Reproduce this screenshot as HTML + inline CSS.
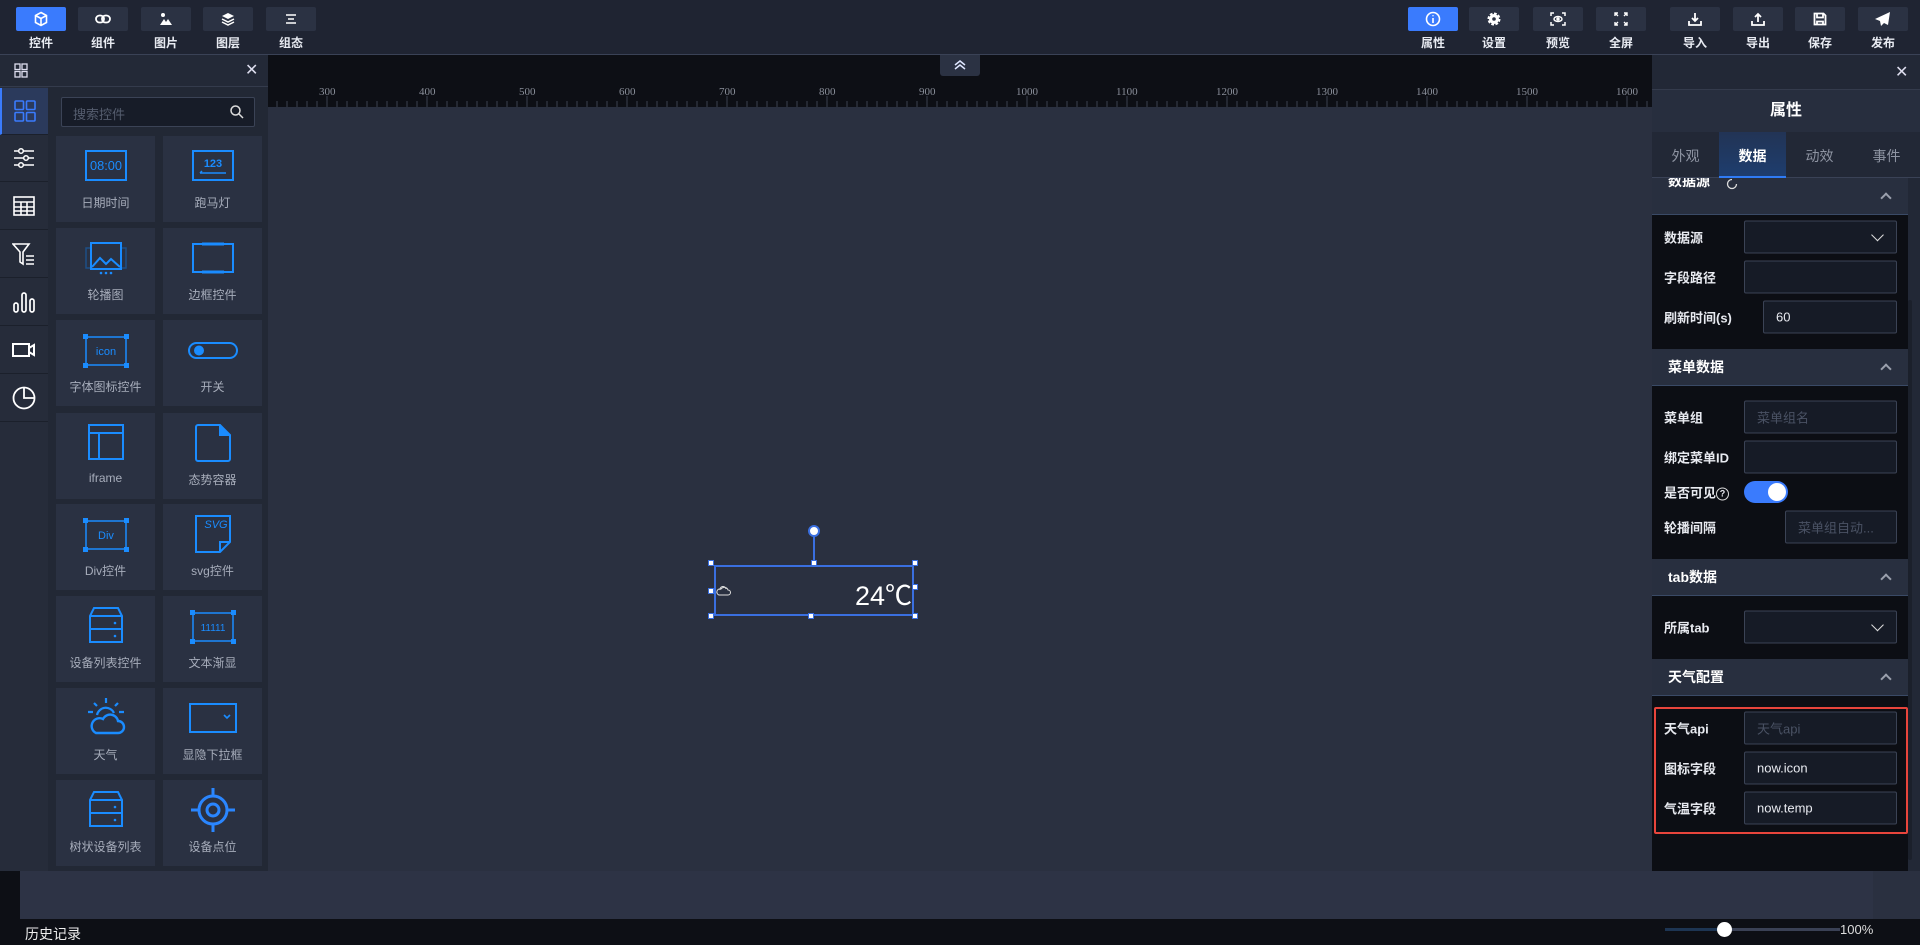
<!DOCTYPE html>
<html><head><meta charset="utf-8"><style>
*{box-sizing:border-box;margin:0;padding:0}
body{width:1920px;height:945px;overflow:hidden;background:#2a3040;font-family:"Liberation Sans","Noto Sans CJK SC",sans-serif;color:#fff;position:relative;font-size:13px}
.a{position:absolute}
.top{left:0;top:0;width:1920px;height:55px;background:#1f2432;border-bottom:1px solid #3a4256}
.tb{position:absolute;top:7px;width:50px;height:24px;background:#2b3243;border-radius:2px;display:flex;align-items:center;justify-content:center}
.tb.on{background:#3a7bfd}
.tl{position:absolute;top:34px;width:50px;text-align:center;font-size:12px;font-weight:bold;color:#e8ebf2}
.ruler{left:268px;top:55px;width:1384px;height:52px;background:#0d0f15}
.rn{position:absolute;top:31px;font-family:"Liberation Serif",serif;font-size:11px;color:#8a8f9a}
.lp{left:0;top:55px;width:268px;height:816px;background:#222835}
.side{left:0;top:87px;width:48px;height:784px;background:#262c3a}
.si{position:absolute;left:0;width:48px;height:47px;border-bottom:1px solid #1b202b;display:flex;align-items:center;justify-content:center}
.tile{position:absolute;width:99px;height:86px;background:#2a3142}
.tile svg{position:absolute;left:50%;top:14px;transform:translateX(-50%)}
.tile span{position:absolute;left:0;right:0;top:58px;text-align:center;color:#a7adbb;font-size:12px}
.rp{left:1652px;top:55px;width:268px;height:816px;background:#222836}
.sh{position:absolute;left:1652px;width:256px;height:37px;background:#282f3f;border-bottom:1px solid #3a4a66;font-weight:bold;font-size:14px;padding-left:16px;display:flex;align-items:center}
.sh:after{content:"";position:absolute;right:18px;top:16px;width:6px;height:6px;border-left:2px solid #9aa0ad;border-top:2px solid #9aa0ad;transform:rotate(45deg)}
.lb{position:absolute;left:1664px;font-size:13px;font-weight:bold;color:#e8eaf0;transform:translateY(-50%)}
.in{position:absolute;height:33px;background:#161b26;border:1px solid #3b4355;border-radius:2px;transform:translateY(-50%);padding-left:12px;display:flex;align-items:center;font-size:13px;color:#e8eaf0}
.ph{color:#4a5264}
.dd:after{content:"";position:absolute;right:14px;top:9px;width:8px;height:8px;border-right:1.5px solid #ddd;border-bottom:1.5px solid #ddd;transform:rotate(45deg)}
.h{position:absolute;width:6px;height:6px;background:#fff;border:1.5px solid #3a6fe0}
</style></head><body>
<div class="a top"></div>
<div class="tb on" style="left:16px"><svg width="16" height="16" viewBox="0 0 16 16" fill="none" stroke="#fff" stroke-width="1.6"><path d="M8 1.5l5.5 3v7L8 14.5 2.5 11.5v-7z M2.5 4.5L8 7.5l5.5-3 M8 7.5v7"/></svg></div><div class="tl" style="left:16px">控件</div>
<div class="tb" style="left:78px"><svg width="16" height="10" viewBox="0 0 16 10" fill="none" stroke="#fff" stroke-width="1.8"><rect x="1" y="1.5" width="8" height="7" rx="3.5"/><rect x="7" y="1.5" width="8" height="7" rx="3.5"/></svg></div><div class="tl" style="left:78px">组件</div>
<div class="tb" style="left:141px"><svg width="14" height="14" viewBox="0 0 14 14" fill="#fff"><circle cx="4" cy="3" r="2"/><path d="M1 13l4-6 2 3 2-3 4 6z"/></svg></div><div class="tl" style="left:141px">图片</div>
<div class="tb" style="left:203px"><svg width="14" height="14" viewBox="0 0 14 14" fill="#fff"><path d="M7 1l6 3-6 3-6-3z"/><path d="M1 7l6 3 6-3" stroke="#fff" fill="none" stroke-width="1.5"/><path d="M1 10l6 3 6-3" stroke="#fff" fill="none" stroke-width="1.5"/></svg></div><div class="tl" style="left:203px">图层</div>
<div class="tb" style="left:266px"><svg width="12" height="10" viewBox="0 0 12 10" stroke="#fff" stroke-width="1.5"><path d="M1 1h10M3 5h6M1 9h10"/></svg></div><div class="tl" style="left:266px">组态</div>
<div class="tb on" style="left:1408px"><svg width="16" height="16" viewBox="0 0 16 16" fill="none" stroke="#fff" stroke-width="1.6"><circle cx="8" cy="8" r="6.5"/><path d="M8 7v5M8 4.2v1" /></svg></div><div class="tl" style="left:1408px">属性</div>
<div class="tb" style="left:1469px"><svg width="14" height="14" viewBox="0 0 14 14"><circle cx="7" cy="7" r="5" fill="#fff" stroke="#fff" stroke-width="3" stroke-dasharray="2.5 1.4"/><circle cx="7" cy="7" r="1.8" fill="#2b3243"/></svg></div><div class="tl" style="left:1469px">设置</div>
<div class="tb" style="left:1533px"><svg width="16" height="14" viewBox="0 0 16 14" fill="none" stroke="#fff" stroke-width="1.5"><path d="M1 4V1h3M12 1h3v3M15 10v3h-3M4 13H1v-3"/><ellipse cx="8" cy="7" rx="4" ry="2.5"/><circle cx="8" cy="7" r="1" fill="#fff"/></svg></div><div class="tl" style="left:1533px">预览</div>
<div class="tb" style="left:1596px"><svg width="14" height="14" viewBox="0 0 14 14" fill="none" stroke="#fff" stroke-width="1.4"><path d="M1 4V1h3M1 1l3 3M10 1h3v3M13 1l-3 3M13 10v3h-3M13 13l-3-3M4 13H1v-3M1 13l3-3"/></svg></div><div class="tl" style="left:1596px">全屏</div>
<div class="tb" style="left:1670px"><svg width="14" height="14" viewBox="0 0 14 14" fill="none" stroke="#fff" stroke-width="1.8"><path d="M7 1v8M4 6l3 3 3-3M1 9v4h12V9"/></svg></div><div class="tl" style="left:1670px">导入</div>
<div class="tb" style="left:1733px"><svg width="14" height="14" viewBox="0 0 14 14" fill="none" stroke="#fff" stroke-width="1.8"><path d="M7 10V2M4 5l3-3 3 3M1 9v4h12V9"/></svg></div><div class="tl" style="left:1733px">导出</div>
<div class="tb" style="left:1795px"><svg width="14" height="14" viewBox="0 0 14 14" fill="none" stroke="#fff" stroke-width="1.8"><path d="M1.5 1.5h9l2 2v9h-11z M4 1.5v4h6v-4 M4 12.5v-3h6v3"/></svg></div><div class="tl" style="left:1795px">保存</div>
<div class="tb" style="left:1858px"><svg width="16" height="14" viewBox="0 0 16 14" fill="#fff"><path d="M15 0L0 7l5 2 1 5 3-3 4 2z"/></svg></div><div class="tl" style="left:1858px">发布</div>

<div class="a ruler">
<div class="rn" style="left:51px">300</div><div class="rn" style="left:151px">400</div><div class="rn" style="left:251px">500</div><div class="rn" style="left:351px">600</div><div class="rn" style="left:451px">700</div><div class="rn" style="left:551px">800</div><div class="rn" style="left:651px">900</div><div class="rn" style="left:748px">1000</div><div class="rn" style="left:848px">1100</div><div class="rn" style="left:948px">1200</div><div class="rn" style="left:1048px">1300</div><div class="rn" style="left:1148px">1400</div><div class="rn" style="left:1248px">1500</div><div class="rn" style="left:1348px">1600</div>
</div>
<svg class="a" style="left:268px;top:96px" width="1384" height="11"><path stroke="#3b4150" stroke-width="1" d="M9 5v6M19 5v6M29 5v6M39 5v6M49 5v6M59 0v11M69 5v6M79 5v6M89 5v6M99 5v6M109 5v6M119 5v6M129 5v6M139 5v6M149 5v6M159 0v11M169 5v6M179 5v6M189 5v6M199 5v6M209 5v6M219 5v6M229 5v6M239 5v6M249 5v6M259 0v11M269 5v6M279 5v6M289 5v6M299 5v6M309 5v6M319 5v6M329 5v6M339 5v6M349 5v6M359 0v11M369 5v6M379 5v6M389 5v6M399 5v6M409 5v6M419 5v6M429 5v6M439 5v6M449 5v6M459 0v11M469 5v6M479 5v6M489 5v6M499 5v6M509 5v6M519 5v6M529 5v6M539 5v6M549 5v6M559 0v11M569 5v6M579 5v6M589 5v6M599 5v6M609 5v6M619 5v6M629 5v6M639 5v6M649 5v6M659 0v11M669 5v6M679 5v6M689 5v6M699 5v6M709 5v6M719 5v6M729 5v6M739 5v6M749 5v6M759 0v11M769 5v6M779 5v6M789 5v6M799 5v6M809 5v6M819 5v6M829 5v6M839 5v6M849 5v6M859 0v11M869 5v6M879 5v6M889 5v6M899 5v6M909 5v6M919 5v6M929 5v6M939 5v6M949 5v6M959 0v11M969 5v6M979 5v6M989 5v6M999 5v6M1009 5v6M1019 5v6M1029 5v6M1039 5v6M1049 5v6M1059 0v11M1069 5v6M1079 5v6M1089 5v6M1099 5v6M1109 5v6M1119 5v6M1129 5v6M1139 5v6M1149 5v6M1159 0v11M1169 5v6M1179 5v6M1189 5v6M1199 5v6M1209 5v6M1219 5v6M1229 5v6M1239 5v6M1249 5v6M1259 0v11M1269 5v6M1279 5v6M1289 5v6M1299 5v6M1309 5v6M1319 5v6M1329 5v6M1339 5v6M1349 5v6M1359 0v11M1369 5v6M1379 5v6"/></svg>
<div class="a" style="left:940px;top:55px;width:40px;height:21px;background:#2b3243;border-radius:0 0 3px 3px"><svg class="a" style="left:14px;top:4px" width="12" height="12" viewBox="0 0 12 12" fill="none" stroke="#dfe6ff" stroke-width="1.5"><path d="M1 6l5-4 5 4M1 10l5-4 5 4"/></svg></div>

<div class="a" style="left:20px;top:871px;width:1853px;height:48px;background:#2d3345"></div>
<div class="a" style="left:0;top:871px;width:20px;height:74px;background:#0d0f15"></div>
<div class="a" style="left:0;top:919px;width:1920px;height:26px;background:#0d0f15"></div>
<div class="a" style="left:25px;top:924px;font-size:14px;color:#eee">历史记录</div>
<div class="a" style="left:1665px;top:928px;width:175px;height:3px;background:#3a4155"></div>
<div class="a" style="left:1665px;top:928px;width:60px;height:3px;background:#1d3553"></div>
<div class="a" style="left:1717px;top:922px;width:15px;height:15px;border-radius:50%;background:#fff"></div>
<div class="a" style="left:1840px;top:922px;font-size:13px;color:#ddd">100%</div>

<div class="a lp"></div>
<div class="a" style="left:0;top:55px;width:268px;height:32px;background:#232937;border-bottom:1px solid #343b4c"></div>
<svg class="a" style="left:14px;top:63px" width="14" height="15" viewBox="0 0 14 15" fill="none" stroke="#dde" stroke-width="1.3"><rect x="1" y="1" width="5" height="5.5"/><rect x="8" y="1" width="5" height="5.5"/><rect x="1" y="8.5" width="5" height="5.5"/><rect x="8" y="8.5" width="5" height="5.5"/></svg>
<div class="a" style="left:245px;top:60px;font-size:16px;color:#dde">✕</div>
<div class="a side"></div>
<div class="si" style="top:88px;background:#2b3a5c;border-left:2px solid #3a7bfd"><svg width="22" height="22" viewBox="0 0 22 22" fill="none" stroke="#3a7bfd" stroke-width="1.6"><rect x="1" y="1" width="8.5" height="8.5" rx="1"/><rect x="12.5" y="1" width="8.5" height="8.5" rx="1"/><rect x="1" y="12.5" width="8.5" height="8.5" rx="1"/><rect x="12.5" y="12.5" width="8.5" height="8.5" rx="1"/></svg></div>
<div class="si" style="top:135px"><svg width="22" height="22" viewBox="0 0 22 22" fill="none" stroke="#fff" stroke-width="1.5"><path d="M1 4h20M1 11h20M1 18h20"/><circle cx="8" cy="4" r="2.3" fill="#262c3a"/><circle cx="13" cy="11" r="2.3" fill="#262c3a"/><circle cx="8" cy="18" r="2.3" fill="#262c3a"/></svg></div>
<div class="si" style="top:183px"><svg width="22" height="20" viewBox="0 0 22 20" fill="none" stroke="#fff" stroke-width="1.6"><rect x="1" y="1" width="20" height="18"/><path d="M1 6h20M1 11h20M1 15h20M8 6v13M14 6v13"/></svg></div>
<div class="si" style="top:231px"><svg width="24" height="24" viewBox="0 0 24 24" fill="none" stroke="#fff" stroke-width="1.6"><path d="M1 2h16l-6 8v12l-3-2V10z M14 14h8M14 18h8M14 22h8"/></svg></div>
<div class="si" style="top:279px"><svg width="22" height="22" viewBox="0 0 22 22" fill="none" stroke="#fff" stroke-width="1.7"><rect x="1" y="12" width="4" height="9" rx="2"/><rect x="9" y="2" width="4" height="19" rx="2"/><rect x="17" y="8" width="4" height="13" rx="2"/></svg></div>
<div class="si" style="top:327px"><svg width="24" height="16" viewBox="0 0 24 16" fill="none" stroke="#fff" stroke-width="2"><rect x="1" y="2" width="16" height="12"/><path d="M17 6l5-3v10l-5-3"/></svg></div>
<div class="si" style="top:375px"><svg width="24" height="24" viewBox="0 0 24 24" fill="none" stroke="#fff" stroke-width="1.8"><circle cx="12" cy="12" r="10.5"/><path d="M12 1.5V12h10.5"/></svg></div>
<div class="a" style="left:61px;top:97px;width:194px;height:30px;background:#171c28;border:1px solid #3b4356;border-radius:2px"><span class="a" style="left:11px;top:6px;color:#555d6e;font-size:13px">搜索控件</span><svg class="a" style="left:168px;top:7px" width="14" height="14" viewBox="0 0 14 14" fill="none" stroke="#ddd" stroke-width="1.5"><circle cx="5.5" cy="5.5" r="4.5"/><path d="M9 9l4 4"/></svg></div>

<div class="tile" style="left:56px;top:136px"><svg width="42" height="32" viewBox="0 0 42 32"><rect x="1" y="1" width="40" height="29" fill="none" stroke="#1a8cff" stroke-width="2"/><text x="21" y="20" text-anchor="middle" font-family="Liberation Sans,sans-serif" font-size="13" textLength="32" lengthAdjust="spacingAndGlyphs" fill="#1a8cff">08:00</text></svg><span>日期时间</span></div>
<div class="tile" style="left:163px;top:136px"><svg width="42" height="32" viewBox="0 0 42 32"><rect x="1" y="1" width="40" height="29" fill="none" stroke="#1a8cff" stroke-width="2"/><text x="21" y="17" text-anchor="middle" font-family="Liberation Sans,sans-serif" font-size="11" font-weight="bold" fill="#1a8cff">123</text><path d="M8 23h26M8 23l2-2" stroke="#1a8cff" stroke-width="1.5"/></svg><span>跑马灯</span></div>
<div class="tile" style="left:56px;top:228px"><svg width="42" height="34" viewBox="0 0 42 34"><rect x="1" y="6" width="40" height="20" fill="none" stroke="#1d4f86" stroke-width="1.5"/><rect x="6" y="1" width="30" height="26" fill="#2a3142" stroke="#1a8cff" stroke-width="2"/><path d="M7 25l8-9 6 6 5-5 9 8" fill="none" stroke="#1a8cff" stroke-width="2"/><circle cx="16" cy="31" r="1.3" fill="#1a8cff"/><circle cx="21" cy="31" r="1.3" fill="#1a8cff"/><circle cx="26" cy="31" r="1.3" fill="#1a8cff"/></svg><span>轮播图</span></div>
<div class="tile" style="left:163px;top:228px"><svg width="42" height="32" viewBox="0 0 42 32"><rect x="1" y="2" width="40" height="28" fill="none" stroke="#1a8cff" stroke-width="2"/><path d="M10 2h22M10 30h22" stroke="#1a8cff" stroke-width="3"/></svg><span>边框控件</span></div>
<div class="tile" style="left:56px;top:320px"><svg width="46" height="34" viewBox="0 0 46 34"><rect x="3" y="3" width="40" height="28" fill="none" stroke="#1a8cff" stroke-width="1.5"/><rect x="0" y="0" width="5" height="5" fill="#1a8cff"/><rect x="41" y="0" width="5" height="5" fill="#1a8cff"/><rect x="0" y="29" width="5" height="5" fill="#1a8cff"/><rect x="41" y="29" width="5" height="5" fill="#1a8cff"/><text x="23" y="21" text-anchor="middle" font-family="Liberation Sans,sans-serif" font-size="11" fill="#1a8cff">icon</text></svg><span>字体图标控件</span></div>
<div class="tile" style="left:163px;top:320px"><svg width="52" height="34" viewBox="0 0 52 34"><rect x="2" y="9" width="48" height="15" rx="7.5" fill="none" stroke="#1a8cff" stroke-width="2"/><circle cx="12" cy="16.5" r="5" fill="#1a8cff"/></svg><span>开关</span></div>
<div class="tile" style="left:56px;top:413px"><svg width="38" height="38" viewBox="0 0 38 38" style="top:10px"><rect x="2" y="2" width="34" height="34" fill="none" stroke="#1a8cff" stroke-width="2"/><path d="M2 10h34M12 10v26" stroke="#1a8cff" stroke-width="2"/></svg><span>iframe</span></div>
<div class="tile" style="left:163px;top:413px"><svg width="38" height="40" viewBox="0 0 38 40" style="top:10px"><path d="M4 2h22l10 10v24a2 2 0 0 1-2 2H4a2 2 0 0 1-2-2V4a2 2 0 0 1 2-2z" fill="none" stroke="#1a8cff" stroke-width="2"/><path d="M25 2v11h11z" fill="#1a8cff"/></svg><span>态势容器</span></div>
<div class="tile" style="left:56px;top:504px"><svg width="46" height="34" viewBox="0 0 46 34"><rect x="3" y="3" width="40" height="28" fill="none" stroke="#1a8cff" stroke-width="1.5"/><rect x="0" y="0" width="5" height="5" fill="#1a8cff"/><rect x="41" y="0" width="5" height="5" fill="#1a8cff"/><rect x="0" y="29" width="5" height="5" fill="#1a8cff"/><rect x="41" y="29" width="5" height="5" fill="#1a8cff"/><text x="23" y="21" text-anchor="middle" font-family="Liberation Sans,sans-serif" font-size="11" fill="#1a8cff">Div</text></svg><span>Div控件</span></div>
<div class="tile" style="left:163px;top:504px"><svg width="40" height="40" viewBox="0 0 40 40" style="top:10px"><path d="M3 2h34v26l-10 10H3z M27 38V28h10" fill="none" stroke="#1a8cff" stroke-width="2"/><text x="23" y="14" text-anchor="middle" font-family="Liberation Sans,sans-serif" font-style="italic" font-size="11" fill="#1a8cff">SVG</text></svg><span>svg控件</span></div>
<div class="tile" style="left:56px;top:596px"><svg width="36" height="38" viewBox="0 0 36 38" style="top:10px"><path d="M6 2h24l4 8v26H2V10z M2 10h32M2 23h32" fill="none" stroke="#1a8cff" stroke-width="2"/><circle cx="27" cy="17" r="1.3" fill="#1a8cff"/><circle cx="27" cy="30" r="1.3" fill="#1a8cff"/></svg><span>设备列表控件</span></div>
<div class="tile" style="left:163px;top:596px"><svg width="46" height="34" viewBox="0 0 46 34"><rect x="3" y="3" width="40" height="28" fill="none" stroke="#1a8cff" stroke-width="1.5"/><rect x="0" y="0" width="5" height="5" fill="#1a8cff"/><rect x="41" y="0" width="5" height="5" fill="#1a8cff"/><rect x="0" y="29" width="5" height="5" fill="#1a8cff"/><rect x="41" y="29" width="5" height="5" fill="#1a8cff"/><text x="23" y="21" text-anchor="middle" font-family="Liberation Sans,sans-serif" font-size="10" fill="#1a8cff">11111</text></svg><span>文本渐显</span></div>
<div class="tile" style="left:56px;top:688px"><svg width="44" height="40" viewBox="0 0 44 40" style="top:8px"><path d="M22 2v5M10 7l3 3M34 7l-3 3M4 16h5M35 16h5" stroke="#1a8cff" stroke-width="2.2"/><path d="M13 19a9 9 0 0 1 17-2" fill="none" stroke="#1a8cff" stroke-width="2.2"/><path d="M12 37h22a6 6 0 0 0 0-12 8 8 0 0 0-15-2 7 7 0 0 0-7 14z" fill="none" stroke="#1a8cff" stroke-width="2.4"/></svg><span>天气</span></div>
<div class="tile" style="left:163px;top:688px"><svg width="50" height="32" viewBox="0 0 50 32"><rect x="2" y="2" width="46" height="28" fill="none" stroke="#1a8cff" stroke-width="2"/><path d="M36 13l3 3 3-3" fill="none" stroke="#1a8cff" stroke-width="1.6"/></svg><span>显隐下拉框</span></div>
<div class="tile" style="left:56px;top:780px"><svg width="36" height="38" viewBox="0 0 36 38" style="top:10px"><path d="M6 2h24l4 8v26H2V10z M2 10h32M2 23h32" fill="none" stroke="#1a8cff" stroke-width="2"/><circle cx="27" cy="17" r="1.3" fill="#1a8cff"/><circle cx="27" cy="30" r="1.3" fill="#1a8cff"/></svg><span>树状设备列表</span></div>
<div class="tile" style="left:163px;top:780px"><svg width="48" height="48" viewBox="0 0 48 48" style="top:6px"><circle cx="24" cy="24" r="14" fill="none" stroke="#2a86ff" stroke-width="3"/><circle cx="24" cy="24" r="6" fill="none" stroke="#2a86ff" stroke-width="3"/><path d="M24 2v8M24 38v8M2 24h8M38 24h8" stroke="#2a86ff" stroke-width="3"/></svg><span>设备点位</span></div>

<div class="a" style="left:714px;top:565px;width:200px;height:51px;border:2px solid #3a6fe0"></div>
<div class="a" style="left:813px;top:533px;width:2px;height:32px;background:#3a6fe0"></div>
<div class="a" style="left:808px;top:525px;width:12px;height:12px;border-radius:50%;background:#fff;border:2px solid #3a6fe0"></div>
<div class="h" style="left:708px;top:560px"></div><div class="h" style="left:811px;top:560px"></div><div class="h" style="left:912px;top:560px"></div>
<div class="h" style="left:708px;top:588px"></div><div class="h" style="left:912px;top:584px"></div>
<div class="h" style="left:708px;top:613px"></div><div class="h" style="left:808px;top:613px"></div><div class="h" style="left:912px;top:613px"></div>
<svg class="a" style="left:716px;top:585px" width="15" height="11" viewBox="0 0 15 11" fill="none" stroke="#ddd" stroke-width="1"><path d="M3 10h9a2.5 2.5 0 0 0 0-5 4 4 0 0 0-7-1 3 3 0 0 0-2 6z M4 5a3 3 0 0 1 6-1"/></svg>
<div class="a" style="left:855px;top:574px;font-size:27px;color:#fff">24℃</div>

<div class="a rp"></div>
<div class="a" style="left:1652px;top:55px;width:268px;height:35px;background:#222836;border-bottom:1px solid #343b4c"></div>
<div class="a" style="left:1895px;top:62px;font-size:16px;color:#dde">✕</div>
<div class="a" style="left:1652px;top:90px;width:268px;height:42px;background:#272e3e;text-align:center;font-size:16px;font-weight:bold;line-height:42px">属性</div>
<div class="a" style="left:1652px;top:132px;width:268px;height:46px;background:#222836;border-bottom:1px solid #3a4256"></div>
<div class="a" style="left:1719px;top:132px;width:67px;height:46px;background:linear-gradient(#223455,#1e3d6e);border-bottom:2px solid #2f7bf5"></div>
<div class="a" style="left:1652px;top:146px;width:67px;text-align:center;font-size:14px;color:#8e94a2">外观</div>
<div class="a" style="left:1719px;top:146px;width:67px;text-align:center;font-size:14px;font-weight:bold;color:#fff">数据</div>
<div class="a" style="left:1786px;top:146px;width:67px;text-align:center;font-size:14px;color:#8e94a2">动效</div>
<div class="a" style="left:1853px;top:146px;width:67px;text-align:center;font-size:14px;color:#8e94a2">事件</div>
<div class="a" style="left:1652px;top:178px;width:256px;height:693px;background:#0c0e14;overflow:hidden"></div>
<div class="sh" style="top:178px;height:37px;align-items:flex-start;overflow:hidden"><span style="margin-top:-7px">数据源</span><svg style="margin-left:16px;margin-top:0px" width="12" height="12" viewBox="0 0 12 12" fill="none" stroke="#ddd" stroke-width="1.3"><path d="M10.5 6A4.5 4.5 0 1 1 6 1.5"/></svg></div>
<div class="a" style="left:1908px;top:300px;width:4px;height:560px;background:#1b202b;border-radius:2px"></div>
<div class="lb" style="top:237px">数据源</div><div class="in dd" style="left:1744px;top:237px;width:153px"></div>
<div class="lb" style="top:277px">字段路径</div><div class="in" style="left:1744px;top:277px;width:153px"></div>
<div class="lb" style="top:317px">刷新时间(s)</div><div class="in" style="left:1763px;top:317px;width:134px">60</div>
<div class="sh" style="top:349px">菜单数据</div>
<div class="lb" style="top:417px">菜单组</div><div class="in" style="left:1744px;top:417px;width:153px"><span class="ph">菜单组名</span></div>
<div class="lb" style="top:457px">绑定菜单ID</div><div class="in" style="left:1744px;top:457px;width:153px"></div>
<div class="lb" style="top:492px">是否可见<span style="display:inline-block;width:13px;height:13px;border:1.3px solid #ddd;border-radius:50%;font-size:9px;text-align:center;line-height:11px;vertical-align:1px">?</span></div>
<div class="a" style="left:1744px;top:481px;width:44px;height:22px;border-radius:11px;background:#3a7bfd"><div class="a" style="left:24px;top:2px;width:18px;height:18px;border-radius:50%;background:#fff"></div></div>
<div class="lb" style="top:527px">轮播间隔</div><div class="in" style="left:1785px;top:527px;width:112px"><span class="ph">菜单组自动...</span></div>
<div class="sh" style="top:559px">tab数据</div>
<div class="lb" style="top:627px">所属tab</div><div class="in dd" style="left:1744px;top:627px;width:153px"></div>
<div class="sh" style="top:659px">天气配置</div>
<div class="a" style="left:1654px;top:707px;width:254px;height:127px;border:2px solid #e8453c;border-radius:2px"></div>
<div class="lb" style="top:728px">天气api</div><div class="in" style="left:1744px;top:728px;width:153px"><span class="ph">天气api</span></div>
<div class="lb" style="top:768px">图标字段</div><div class="in" style="left:1744px;top:768px;width:153px">now.icon</div>
<div class="lb" style="top:808px">气温字段</div><div class="in" style="left:1744px;top:808px;width:153px">now.temp</div>
</body></html>
